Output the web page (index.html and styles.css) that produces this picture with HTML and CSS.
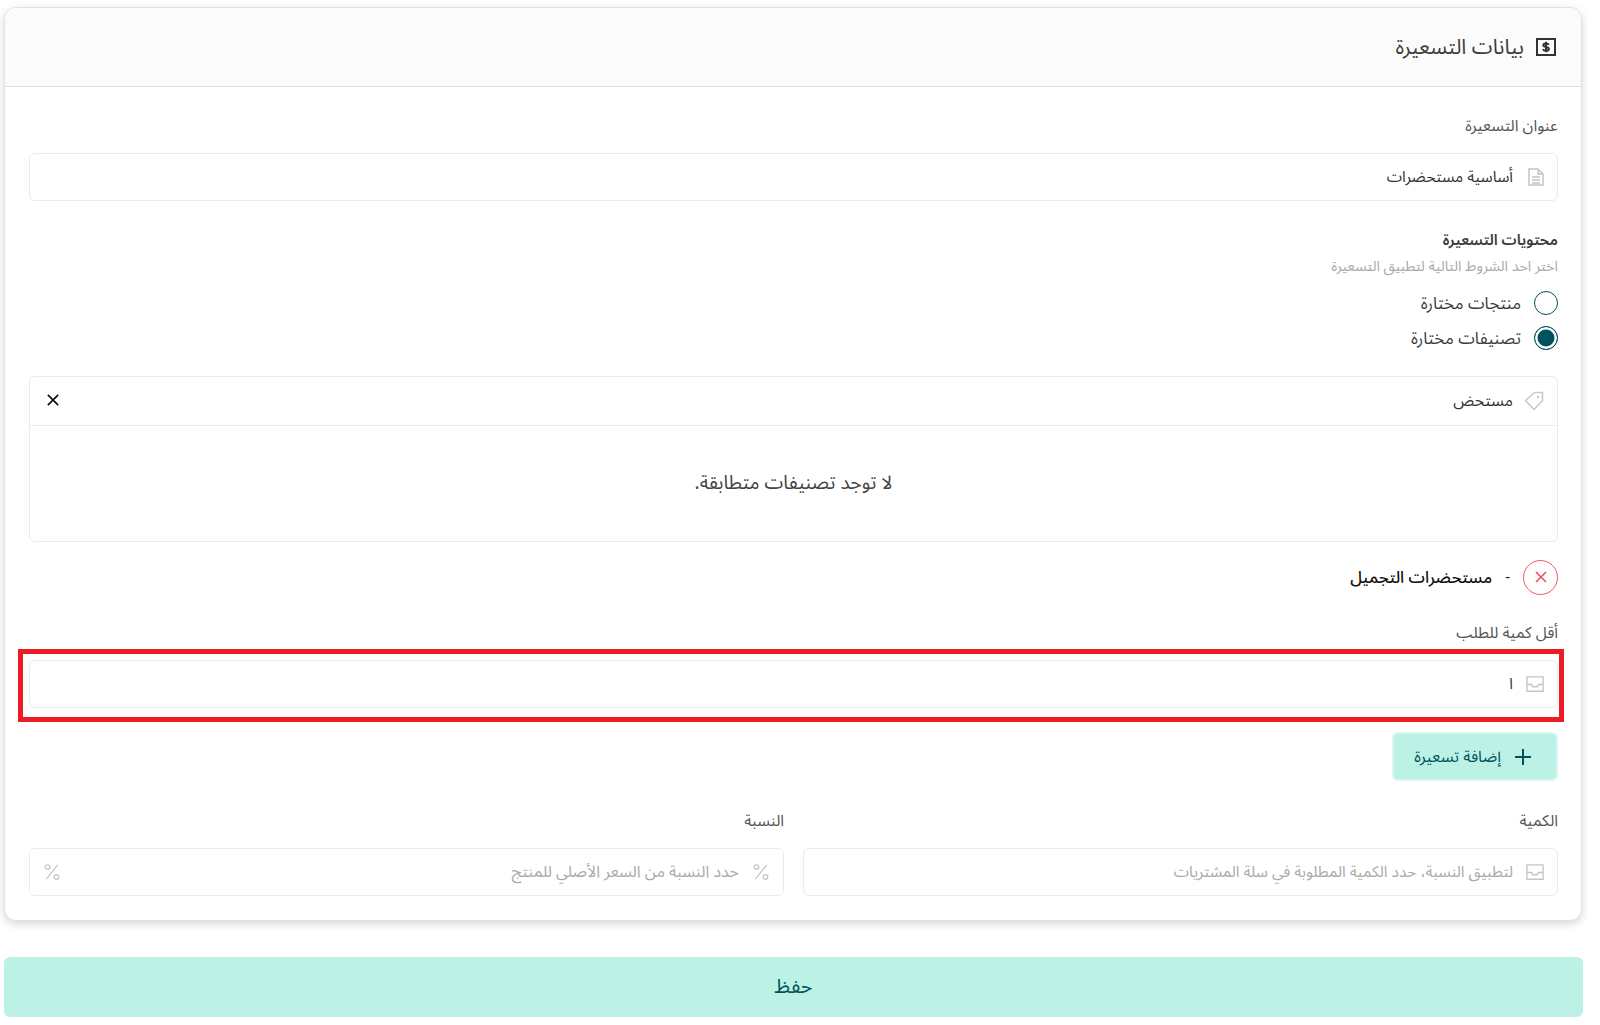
FILE: index.html
```html
<!DOCTYPE html>
<html lang="ar" dir="rtl">
<head>
<meta charset="utf-8">
<title>بيانات التسعيرة</title>
<link rel="stylesheet" href="styles.css">
</head>
<body>
<svg class="defs" width="0" height="0" aria-hidden="true">
  <symbol id="inbox" viewBox="0 0 20 18"><path d="M1 1h18v16H1z M1 9.500h5l1.500 2.500h5l1.500-2.500h5" fill="none" stroke="currentColor" stroke-width="1.500"/></symbol>
  <symbol id="pct" viewBox="0 0 20 20"><path d="M16.500 2 3.500 18" fill="none" stroke="currentColor" stroke-width="1.300"/><circle cx="5" cy="4.500" r="2.600" fill="none" stroke="currentColor" stroke-width="1.300"/><circle cx="15" cy="15.500" r="2.600" fill="none" stroke="currentColor" stroke-width="1.300"/></symbol>
</svg>
<main class="page">
  <section class="card">
    <header class="card-head">
      <svg class="head-icon" viewBox="0 0 20 18"><path d="M1 1h18v16H1z" fill="none" stroke="currentColor" stroke-width="2"/><path d="M13 6.800c-.6-.9-1.600-1.300-3-1.300-1.600 0-2.700.6-2.700 1.700 0 2.500 5.600 1.200 5.600 3.700 0 1.100-1.200 1.800-2.900 1.800-1.500 0-2.600-.5-3.200-1.400M10 3.800v10.400" fill="none" stroke="currentColor" stroke-width="2"/></svg>
      <h1 class="card-title">بيانات التسعيرة</h1>
    </header>
    <div class="card-body">
      <label class="label label-first">عنوان التسعيرة</label>
      <div class="input input-doc">
        <svg class="ico" viewBox="0 0 16 18"><path d="M1 1h9l5 5v11H1z M10 1v5h5 M4 9h8 M4 12h8 M4 15h8" fill="none" stroke="currentColor" stroke-width="1.500"/></svg>
        <span class="value">أساسية مستحضرات</span>
      </div>

      <h2 class="section-title">محتويات التسعيرة</h2>
      <p class="hint">اختر احد الشروط التالية لتطبيق التسعيرة</p>
      <div class="radios">
        <div class="radio-row"><span class="radio"></span><span class="radio-text">منتجات مختارة</span></div>
        <div class="radio-row"><span class="radio radio-on"></span><span class="radio-text">تصنيفات مختارة</span></div>
      </div>

      <div class="picker">
        <div class="picker-head">
          <svg class="tag" viewBox="0 0 20 20"><path d="M1.500 9.500 10.500 1.500H18.500V9.500L10 18.500z" fill="none" stroke="currentColor" stroke-width="1.600" stroke-linejoin="round"/><circle cx="14" cy="6" r="1.200" fill="currentColor"/></svg>
          <span class="value picker-value">مستحض</span>
          <svg class="close" viewBox="0 0 14 14"><path d="M1 1l12 12M13 1 1 13" fill="none" stroke="currentColor" stroke-width="2"/></svg>
        </div>
        <div class="picker-empty">لا توجد تصنيفات متطابقة.</div>
      </div>

      <div class="chip">
        <span class="chip-x"><svg viewBox="0 0 14 14"><path d="M2 2l10 10M12 2 2 12" fill="none" stroke="currentColor" stroke-width="1.500"/></svg></span>
        <span class="chip-dash">-</span>
        <span class="chip-text">مستحضرات التجميل</span>
      </div>

      <label class="label label-min">أقل كمية للطلب</label>
      <div class="input marked">
        <svg class="ico ico-wide"><use href="#inbox"/></svg>
        <span class="value">ا</span>
      </div>

      <button class="add-btn" type="button">
        <svg class="plus" viewBox="0 0 16 16"><path d="M8 0v16M0 8h16" fill="none" stroke="currentColor" stroke-width="2"/></svg>
        <span>إضافة تسعيرة</span>
      </button>

      <div class="grid">
        <div>
          <label class="label">الكمية</label>
          <div class="input">
            <svg class="ico ico-wide"><use href="#inbox"/></svg>
            <span class="placeholder">لتطبيق النسبة، حدد الكمية المطلوبة في سلة المشتريات</span>
          </div>
        </div>
        <div>
          <label class="label">النسبة</label>
          <div class="input">
            <svg class="ico ico-wide"><use href="#pct"/></svg>
            <span class="placeholder placeholder-wide">حدد النسبة من السعر الأصلي للمنتج</span>
            <svg class="ico ico-wide"><use href="#pct"/></svg>
          </div>
        </div>
      </div>
    </div>
  </section>
  <button class="save" type="button">حفظ</button>
</main>
</body>
</html>
```
FILE: styles.css
```css
* { box-sizing: border-box; }
html, body { margin: 0; background: #fff; }
body { font-family: "Noto Sans Arabic", "Noto Sans", "DejaVu Sans", sans-serif; color: #333; overflow: hidden; }
.defs { position: absolute; }
.page { padding: 7px 18px 8px 4px; width: 1600px; direction: rtl; }
.card { width: 1578px; height: 914px; background: #fff; border: 1px solid #e2e2e2; border-radius: 12px; box-shadow: 0 3px 8px rgba(0,0,0,.16); overflow: hidden; }
.card-head { height: 79px; background: #fbfbfb; border-bottom: 1px solid #dedede; display: flex; align-items: center; gap: 12px; padding: 0 25px; }
.head-icon { width: 20px; height: 18px; color: #333; flex: none; }
.card-title { margin: 0; font-size: 21px; font-weight: 400; color: #3d3d3d; line-height: 28px; }
.card-body { padding: 0 23px 0 24px; }
.label { display: block; font-size: 15.800px; line-height: 20px; color: #555; margin-bottom: 17px; }
.label-first { padding-top: 29px; }
.input { height: 48px; border: 1px solid #ebebeb; border-radius: 6px; display: flex; align-items: center; gap: 13px; padding: 0 13px; background: #fff; }
.input-doc { gap: 15px; }
.ico { width: 16px; height: 18px; color: #c4c4c4; flex: none; }
.ico-wide { width: 18px; height: 18px; }
.value { font-size: 15.500px; color: #333; }
.placeholder { font-size: 15.500px; color: #aaa; }
.placeholder-wide { flex: 1; font-size: 16px; }
.section-title { margin: 28px 0 0; font-size: 15px; line-height: 22px; font-weight: 600; color: #3a3a3a; }
.hint { margin: 6px 0 0; font-size: 14.400px; line-height: 20px; color: #aaa; }
.radios { margin-top: 14px; display: flex; flex-direction: column; gap: 11px; }
.radio-row { display: flex; align-items: center; gap: 13px; height: 24px; }
.radio { width: 24px; height: 24px; border: 1.500px solid #00535c; border-radius: 50%; flex: none; background: #fff; }
.radio-on { background: #00535c; box-shadow: inset 0 0 0 2.500px #fff; }
.radio-text { font-size: 16.800px; color: #3d3d3d; }
.picker { margin-top: 26px; height: 166px; border: 1px solid #ebebeb; border-radius: 6px; }
.picker-head { height: 49px; border-bottom: 1px solid #ebebeb; display: flex; align-items: center; gap: 11px; padding: 0 13px 0 17px; }
.tag { width: 20px; height: 20px; color: #c8c8c8; flex: none; }
.picker-value { flex: 1; font-size: 16px; }
.close { width: 12px; height: 12px; color: #111; flex: none; margin-bottom: 2px; }
.picker-empty { height: 115px; padding-bottom: 2px; display: flex; align-items: center; justify-content: center; font-size: 19px; color: #444; }
.chip { margin-top: 18px; display: flex; align-items: center; height: 34px; }
.chip-x { width: 35px; height: 35px; border: 1px solid #ef5a64; border-radius: 50%; color: #ef4a55; display: flex; align-items: center; justify-content: center; flex: none; }
.chip-x svg { width: 14px; height: 14px; }
.chip-dash { margin: 0 13px; font-size: 15px; color: #111; }
.chip-text { font-size: 16.500px; font-weight: 500; color: #111; }
.label-min { margin-top: 29px; margin-bottom: 17px; }
.marked { position: relative; }
.marked::after { content: ""; position: absolute; top: -12px; bottom: -15px; left: -12px; right: -7px; border: 5px solid #ed1c24; pointer-events: none; }
.add-btn { display: flex; align-items: center; gap: 14px; margin-top: 24px; width: 166px; height: 49px; padding: 0 25px 0 8px; background: #bbf2e5; border: 2px solid #d9f7f0; border-radius: 6px; color: #00535c; font: inherit; font-size: 16px; white-space: nowrap; }
.plus { width: 16px; height: 16px; flex: none; }
.grid { margin-top: 30px; display: grid; grid-template-columns: 1fr 1fr; gap: 19px; }
.save { display: block; width: 1579px; height: 60px; margin: 36px -1px 0 0; background: #bbf2e5; border: 0; border-radius: 6px; font: inherit; font-size: 20px; color: #00535c; }
```
